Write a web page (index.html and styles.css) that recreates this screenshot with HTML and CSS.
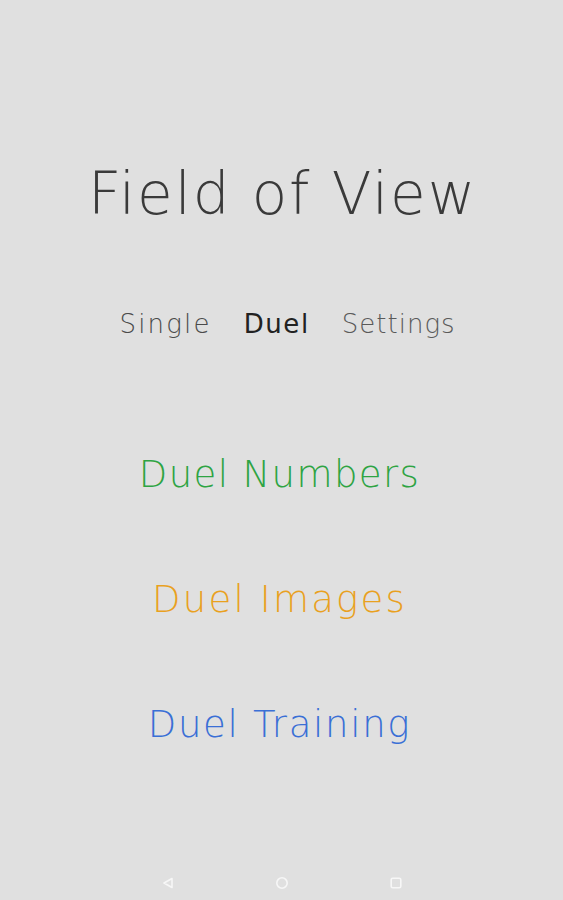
FILE: index.html
```html
<!DOCTYPE html>
<html lang="en">
<head>
<meta charset="utf-8">
<title>Field of View</title>
<link rel="stylesheet" href="styles.css">
</head>
<body>
<div class="screen">
  <main class="content">
    <h1 class="title">Field of View</h1>
    <nav class="tabs">
      <span class="tab">Single</span>
      <span class="tab active">Duel</span>
      <span class="tab muted">Settings</span>
    </nav>
    <ul class="modes">
      <li class="mode green">Duel Numbers</li>
      <li class="mode orange">Duel Images</li>
      <li class="mode blue">Duel Training</li>
    </ul>
  </main>
  <footer class="navbar">
    <svg class="nav-icon" width="14" height="14" viewBox="0 0 14 14"><path d="M11 2.5 L3 7 L11 11.5 Z" fill="none" stroke="#f7f7f7" stroke-width="1.6" stroke-linejoin="round"/></svg>
    <svg class="nav-icon" width="14" height="14" viewBox="0 0 14 14"><circle cx="7" cy="7" r="5.2" fill="none" stroke="#f7f7f7" stroke-width="1.6"/></svg>
    <svg class="nav-icon" width="14" height="14" viewBox="0 0 14 14"><rect x="2.2" y="2.2" width="9.6" height="9.6" rx="1.5" fill="none" stroke="#f7f7f7" stroke-width="1.6"/></svg>
  </footer>
</div>
</body>
</html>
```
FILE: styles.css
```css
html, body {
  margin: 0;
  padding: 0;
  background: #e0e0e0;
}

.screen {
  width: 563px;
  height: 900px;
  display: flex;
  flex-direction: column;
  font-family: "DejaVu Sans", "Noto Sans", sans-serif;
  font-weight: 200;
}

.content {
  flex: 1;
  display: flex;
  flex-direction: column;
  align-items: center;
}

.title {
  margin: 154px 0 0;
  font-size: 58px;
  font-weight: 200;
  line-height: 80px;
  color: #3a3a3a;
  letter-spacing: 1.9px;
  padding-left: 2px;
}

.tabs {
  margin-top: 70px;
  display: flex;
  gap: 32px;
  line-height: 40px;
  font-size: 26px;
  letter-spacing: 2.2px;
  padding-left: 12px;
}

.tab {
  color: #4a4a4a;
}

.tab.active {
  color: #222222;
  font-weight: 400;
  letter-spacing: 1.6px;
}

.tab.muted {
  color: #5a5a5a;
  letter-spacing: 1px;
}

.modes {
  list-style: none;
  margin: 106px 0 0;
  padding: 0;
  display: flex;
  flex-direction: column;
  align-items: center;
  gap: 75px;
}

.mode {
  font-size: 37px;
  line-height: 50px;
  padding-right: 4px;
}

.green { color: #2ea443; letter-spacing: 1.4px; }
.orange { color: #e9a11f; letter-spacing: 2.2px; }
.blue { color: #3a6fd6; letter-spacing: 1.7px; }

.navbar {
  height: 34px;
  display: flex;
  align-items: center;
  justify-content: center;
  gap: 100px;
}

.nav-icon {
  display: block;
}
```
